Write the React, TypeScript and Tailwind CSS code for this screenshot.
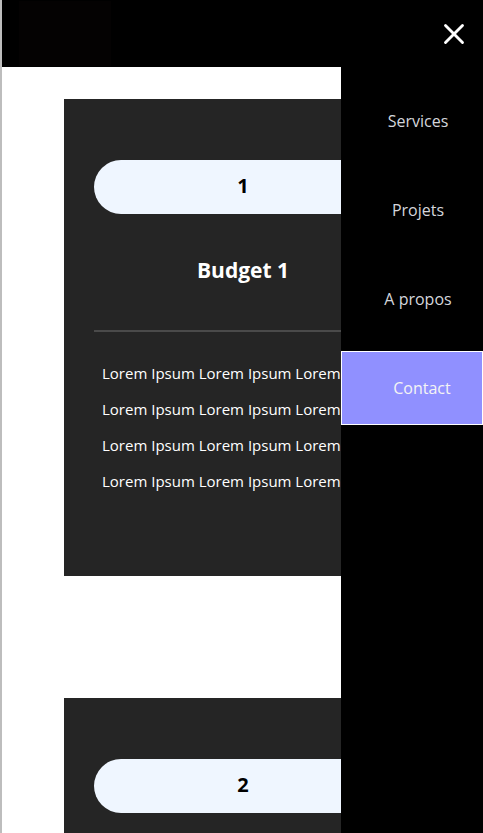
import { X } from "lucide-react";

const lines = [1, 2, 3, 4];

const BudgetCard = ({ n }: { n: number }) => (
    <div className="w-[358px] bg-[#252525] px-[30px] pt-[61px] pb-[85px]">
        <div className="flex h-[54px] items-center justify-center rounded-full bg-blue-50 pb-[3px] text-[20px] font-bold text-black">
            {n}
        </div>
        <h3 className="mt-[42px] text-center text-[21px] font-bold leading-[28px] text-white">
            Budget {n}
        </h3>
        <div className="mt-[46px] h-[2px] bg-[#4a4a4a]" />
        <ul className="mt-[31px] flex flex-col gap-[16px] pl-2">
            {lines.map((l) => (
                <li key={l} className="whitespace-nowrap text-[15px] leading-[20px] text-white">
                    Lorem Ipsum Lorem Ipsum Lorem Ipsum
                </li>
            ))}
        </ul>
    </div>
);

export default function App() {
    const menu = ["Services", "Projets", "A propos"];

    return (
        <div className="relative h-[833px] overflow-hidden border-l-2 border-[#bdbdbd] bg-white font-['Open_Sans',sans-serif]">
            <header className="flex h-[67px] items-center bg-black pl-[17px]">
                <div className="h-[65px] w-[92px] bg-[#040202]" />
            </header>

            <main className="ml-[62px] flex flex-col gap-[122px] pt-[32px]">
                <BudgetCard n={1} />
                <BudgetCard n={2} />
            </main>

            {/* slide-in menu */}
            <nav className="absolute right-0 top-0 bottom-0 w-[142px] bg-black">
                <div className="flex h-[67px] items-center justify-end pr-[12px]">
                    <X size={34} strokeWidth={2} className="text-white" />
                </div>
                <ul className="mt-[17px] flex flex-col gap-[15px]">
                    {menu.map((m) => (
                        <li key={m} className="flex h-[74px] items-center justify-center pl-[12px] text-[16px] text-[#d4d6dc]">
                            {m}
                        </li>
                    ))}
                    <li className="flex h-[74px] items-center justify-center border border-white bg-[#9090ff] pl-[20px] text-[16px] text-[#f4f4f4]">
                        Contact
                    </li>
                </ul>
            </nav>
        </div>
    );
}
